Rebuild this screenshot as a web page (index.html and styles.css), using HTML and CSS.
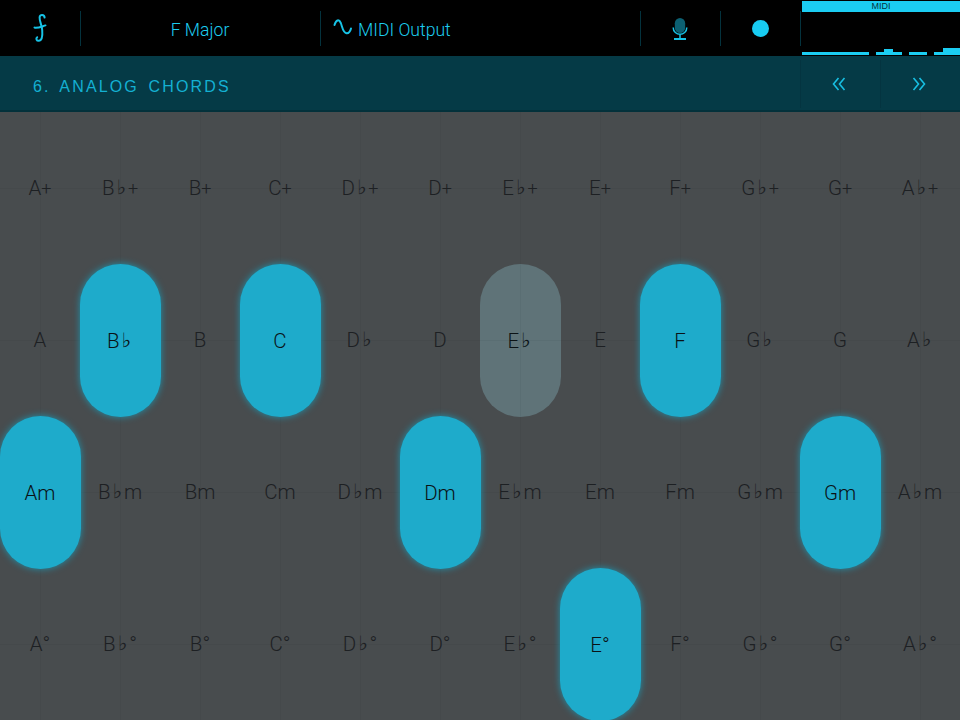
FILE: index.html
```html
<!DOCTYPE html>
<html lang="en">
<head>
<meta charset="utf-8">
<title>Analog Chords</title>
<link rel="stylesheet" href="styles.css">
</head>
<body>
<div class="app">
  <header class="topbar">
    <div class="tool tool-logo">
      <svg class="logo" width="14" height="30" viewBox="0 0 14 30"><path d="M11.6 4.6 C11.4 1.4 6.8 1 6.6 4.4 C6.4 8 8.8 12 9.2 17 C9.6 22 9.6 27.4 6 27.8 C3.4 28 2.6 25.4 4.2 24.2" /><path d="M1.5 14.6 C4.5 15.4 8.5 13.6 12.5 12.4" /></svg>
    </div>
    <div class="tool tool-key">F Major</div>
    <div class="tool tool-output">
      <svg class="wave" width="20" height="18" viewBox="0 0 20 18"><path d="M1.5 7 C3 1.5 6 1 7.8 5 C9.2 8.5 10 14.8 13.5 15.2 C16 15.5 17.2 13.5 18 10.5" /></svg>
      <span>MIDI Output</span>
    </div>
    <div class="tool tool-mic">
      <svg width="16" height="24" viewBox="0 0 16 24"><rect class="mic-body" x="2.8" y="1" width="10.4" height="15" rx="5.2"/><path class="mic-arc" d="M1.2 10.5 C1.2 19.5 14.8 19.5 14.8 10.5 M8 17 V21"/><rect class="mic-base" x="2" y="21" width="12" height="2"/></svg>
    </div>
    <div class="tool tool-record"><span class="dot"></span></div>
    <div class="tool tool-meter">
      <div class="meter-title">MIDI</div>
      <div class="meter-bars">
        <div class="meter-bar w67"></div>
        <div class="meter-bar w26 peak-mid"></div>
        <div class="meter-bar w18"></div>
        <div class="meter-bar w26 peak-end"></div>
      </div>
    </div>
  </header>
  <section class="titlebar">
    <h1 class="title">6. ANALOG CHORDS</h1>
    <div class="nav-btn"><svg width="14" height="14" viewBox="0 0 14 14"><path d="M6.5 1 L1.5 7 L6.5 13 M12.5 1 L7.5 7 L12.5 13"/></svg></div>
    <div class="nav-btn"><svg width="14" height="14" viewBox="0 0 14 14"><path d="M1.5 1 L6.5 7 L1.5 13 M7.5 1 L12.5 7 L7.5 13"/></svg></div>
  </section>
  <main class="grid">
    <div class="cell">A<s>+</s></div><div class="cell">B<i>♭</i><s>+</s></div><div class="cell">B<s>+</s></div><div class="cell">C<s>+</s></div><div class="cell">D<i>♭</i><s>+</s></div><div class="cell">D<s>+</s></div><div class="cell">E<i>♭</i><s>+</s></div><div class="cell">E<s>+</s></div><div class="cell">F<s>+</s></div><div class="cell">G<i>♭</i><s>+</s></div><div class="cell">G<s>+</s></div><div class="cell">A<i>♭</i><s>+</s></div>
    <div class="cell">A</div><div class="cell on">B<i>♭</i></div><div class="cell">B</div><div class="cell on">C</div><div class="cell">D<i>♭</i></div><div class="cell">D</div><div class="cell off">E<i>♭</i></div><div class="cell">E</div><div class="cell on">F</div><div class="cell">G<i>♭</i></div><div class="cell">G</div><div class="cell">A<i>♭</i></div>
    <div class="cell on">Am</div><div class="cell">B<i>♭</i>m</div><div class="cell">Bm</div><div class="cell">Cm</div><div class="cell">D<i>♭</i>m</div><div class="cell on">Dm</div><div class="cell">E<i>♭</i>m</div><div class="cell">Em</div><div class="cell">Fm</div><div class="cell">G<i>♭</i>m</div><div class="cell on">Gm</div><div class="cell">A<i>♭</i>m</div>
    <div class="cell">A°</div><div class="cell">B<i>♭</i>°</div><div class="cell">B°</div><div class="cell">C°</div><div class="cell">D<i>♭</i>°</div><div class="cell">D°</div><div class="cell">E<i>♭</i>°</div><div class="cell on">E°</div><div class="cell">F°</div><div class="cell">G<i>♭</i>°</div><div class="cell">G°</div><div class="cell">A<i>♭</i>°</div>
  </main>
</div>
</body>
</html>
```

FILE: styles.css
```css
* { box-sizing: border-box; }
html, body { margin: 0; padding: 0; }
body { width: 960px; height: 720px; overflow: hidden; background: #000; font-family: Roboto, "Liberation Sans", "DejaVu Sans", sans-serif; font-weight: 300; }
.app { width: 960px; height: 720px; display: flex; flex-direction: column; }

.topbar { height: 56px; background: #000; display: grid; grid-template-columns: 80px 240px 320px 80px 80px 160px; color: #1ccdf0; font-size: 17.6px; }
.tool { display: flex; align-items: center; justify-content: center; position: relative; }
.tool + .tool::before { content: ""; position: absolute; left: 0; top: 11px; height: 35px; width: 1px; background: #04323d; }
.logo path, .wave path { fill: none; stroke: #17c3e6; stroke-width: 2; stroke-linecap: round; }
.tool-key { padding-top: 3px; }
.tool-output { justify-content: flex-start; padding-left: 13px; gap: 5px; padding-top: 3px; }
.wave { margin-top: -5px; }
.mic-body { fill: #0c6072; }
.mic-arc { fill: none; stroke: #17c3e6; stroke-width: 1.5; }
.mic-base { fill: #17c3e6; }
.tool-mic { padding-top: 1px; }
.dot { width: 17px; height: 17px; border-radius: 50%; background: #18ccf2; }
.tool-meter { display: block; padding: 1px 0 0 2px; }
.meter-title { height: 11px; background: #1bcdf2; color: #05333f; font-family: "Liberation Sans", sans-serif; font-weight: 400; font-size: 9px; line-height: 11px; text-align: center; }
.meter-bars { display: flex; gap: 7px; margin-top: 40px; align-items: flex-end; }
.meter-bar { height: 3px; background: #1bcdf2; position: relative; }
.w67 { width: 67px; }
.w26 { width: 26px; }
.w18 { width: 18px; }
.peak-mid::after, .peak-end::after { content: ""; position: absolute; background: #1bcdf2; }
.peak-mid::after { left: 8px; width: 9px; top: -3px; height: 3px; }
.peak-end::after { right: 0; width: 17px; top: -4px; height: 4px; }

.titlebar { height: 56px; background: #053a46; border-bottom: 2px solid #03313b; display: flex; align-items: center; }
.title { flex: 1; margin: 0; padding: 8px 0 0 33px; font-family: "Liberation Sans", sans-serif; font-size: 16px; font-weight: 400; letter-spacing: 2.15px; word-spacing: 3px; color: #14b0d2; }
.nav-btn { width: 80px; height: 48px; margin-top: 2px; display: flex; align-items: center; justify-content: center; border-left: 1px solid #043440; }
.nav-btn svg { margin: -1px 3px 0 0; }
.nav-btn path { fill: none; stroke: #18bfe2; stroke-width: 1.6; }

.grid { flex: 1; display: grid; grid-template-columns: repeat(12, 80px); grid-template-rows: repeat(4, 152px); background-color: #484c4e; }
.cell { --line: #45494b; display: flex; align-items: center; justify-content: center; font-size: 20.5px; color: #1d2023; position: relative; background-image: linear-gradient(var(--line), var(--line)), linear-gradient(var(--line), var(--line)); background-size: 1px 100%, 100% 1px; background-position: center, center; background-repeat: no-repeat; }
.cell i { font-style: normal; font-family: "DejaVu Sans", sans-serif; font-weight: 400; font-size: 20px; line-height: 0; margin: -2px 2px 0 2px; }
.cell s { text-decoration: none; font-size: 18px; }
.on, .off { border-radius: 41px; width: 81px; height: 153px; padding-right: 1px; z-index: 1; }
.on { background-image: none; background-color: #1eabcb; color: #0a1216; box-shadow: 0 0 7px #1f93ad; }
.off { --line: #5a6e73; background-color: #5f7378; color: #0c1316; }
```
